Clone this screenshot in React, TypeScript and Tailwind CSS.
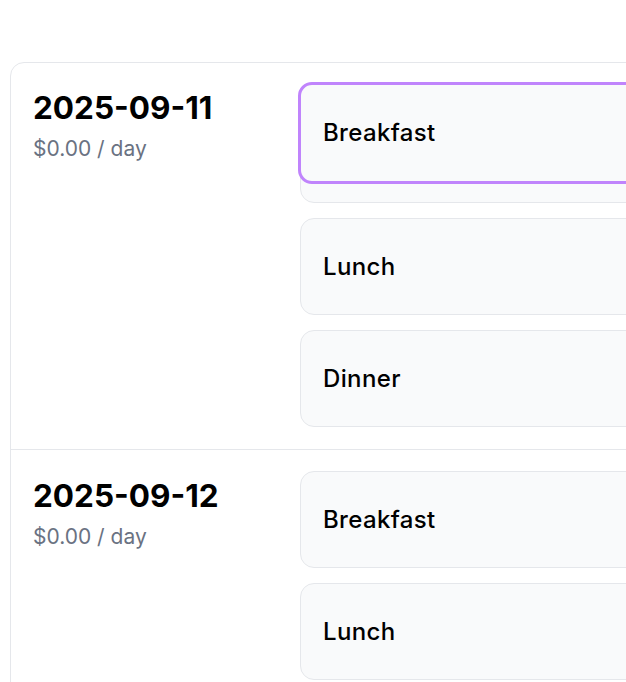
import React from 'react';

type Day = {
  date: string;
  budget: string;
  meals: string[];
  active?: string;
};

const days: Day[] = [
  { date: '2025-09-11', budget: '$0.00 / day', meals: ['Breakfast', 'Lunch', 'Dinner'], active: 'Breakfast' },
  { date: '2025-09-12', budget: '$0.00 / day', meals: ['Breakfast', 'Lunch', 'Dinner'] },
];

const MealCard = ({ name, active }: { name: string; active?: boolean }) => {
  if (active) {
    // lifted card sits over its placeholder
    return (
      <div className="relative pt-[23px]">
        <div className="h-[97px] rounded-[14px] border border-gray-200 bg-gray-50" />
        <div className="absolute top-[-1px] left-[-2px] right-[-2px] h-[102px] rounded-[14px] border-[3px] border-[#c084fc] bg-gray-50 flex items-center px-[22px]">
          <span className="text-[24px] font-medium tracking-[0.015em] text-black">{name}</span>
        </div>
      </div>
    );
  }
  return (
    <div className="h-[97px] rounded-[14px] border border-gray-200 bg-gray-50 flex items-center px-[22px]">
      <span className="text-[24px] font-medium tracking-[0.015em] text-black">{name}</span>
    </div>
  );
};

export default function App() {
  return (
    <div className="w-full h-[682px] overflow-hidden bg-white" style={{ fontFamily: 'Inter, "Noto Sans", sans-serif' }}>
      <div className="pt-[62px] pl-[10px]">
        <div className="w-[900px] rounded-[14px] border border-gray-200 bg-white">
          {days.map((day, i) => (
            <div key={day.date} className={`flex gap-[22px] px-[22px] pb-[22px] ${i > 0 ? 'border-t border-gray-200 pt-[21px]' : 'pt-[20px]'}`}>
              <div className="w-[245px] shrink-0 pt-[7px]">
                <h2 className="text-[31.5px] leading-[36px] font-bold text-black">{day.date}</h2>
                <p className="mt-[9px] text-[21px] leading-[28px] text-gray-500">{day.budget}</p>
              </div>
              <div className="flex-1 flex flex-col gap-[15px]">
                {day.meals.map(m => (
                  <MealCard key={m} name={m} active={day.active === m} />
                ))}
              </div>
            </div>
          ))}
        </div>
      </div>
    </div>
  );
}
